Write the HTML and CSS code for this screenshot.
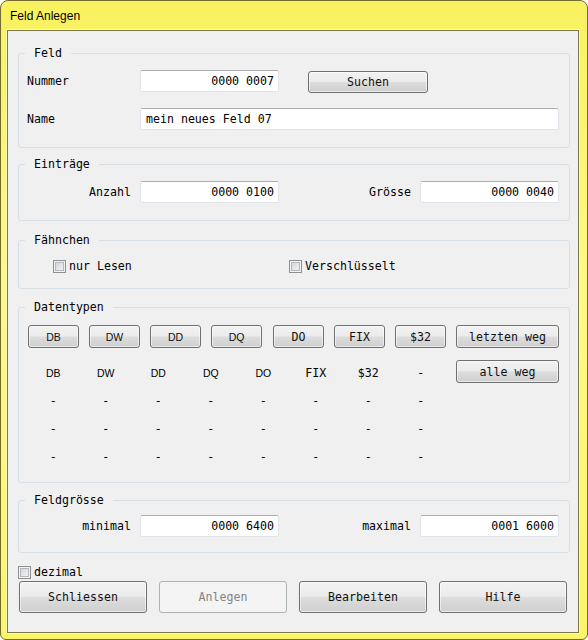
FILE: index.html
```html
<!DOCTYPE html>
<html lang="de">
<head>
<meta charset="utf-8">
<title>Feld Anlegen</title>
<link rel="stylesheet" href="styles.css">
</head>
<body>
<div class="window">
  <div class="titlebar">Feld Anlegen</div>
  <div class="client">
    <fieldset class="group g-feld">
      <legend>Feld</legend>
      <div class="row">
        <span class="lbl lbl-left">Nummer</span>
        <input class="field num" value="0000 0007" readonly>
        <button class="btn btn-suchen" type="button">Suchen</button>
      </div>
      <div class="row row-name">
        <span class="lbl lbl-left">Name</span>
        <input class="field wide" value="mein neues Feld 07" readonly>
      </div>
    </fieldset>

    <fieldset class="group g-eintraege">
      <legend>Einträge</legend>
      <div class="pair-row">
        <span class="lbl lbl-right">Anzahl</span>
        <input class="field num" value="0000 0100" readonly>
        <span class="lbl lbl-right">Grösse</span>
        <input class="field num" value="0000 0040" readonly>
      </div>
    </fieldset>

    <fieldset class="group g-faehnchen">
      <legend>Fähnchen</legend>
      <div class="flag-row">
        <span class="checkitem"><span class="check"></span><span>nur Lesen</span></span>
        <span class="checkitem"><span class="check"></span><span>Verschlüsselt</span></span>
      </div>
    </fieldset>

    <fieldset class="group g-datentypen">
      <legend>Datentypen</legend>
      <div class="dt-buttons">
        <button class="btn dt sans" type="button">DB</button>
        <button class="btn dt sans" type="button">DW</button>
        <button class="btn dt sans" type="button">DD</button>
        <button class="btn dt sans" type="button">DQ</button>
        <button class="btn dt dt-do" type="button">DO</button>
        <button class="btn dt" type="button">FIX</button>
        <button class="btn dt" type="button">$32</button>
        <button class="btn dt-wide" type="button">letzten weg</button>
      </div>
      <div class="dt-body">
        <div class="dt-grid">
          <span class="sans">DB</span><span class="sans">DW</span><span class="sans">DD</span><span class="sans">DQ</span><span class="sans">DO</span><span>FIX</span><span>$32</span><span>-</span>
          <span>-</span><span>-</span><span>-</span><span>-</span><span>-</span><span>-</span><span>-</span><span>-</span>
          <span>-</span><span>-</span><span>-</span><span>-</span><span>-</span><span>-</span><span>-</span><span>-</span>
          <span>-</span><span>-</span><span>-</span><span>-</span><span>-</span><span>-</span><span>-</span><span>-</span>
        </div>
        <button class="btn dt-wide alle" type="button">alle weg</button>
      </div>
    </fieldset>

    <fieldset class="group g-feldgroesse">
      <legend>Feldgrösse</legend>
      <div class="pair-row">
        <span class="lbl lbl-right">minimal</span>
        <input class="field num" value="0000 6400" readonly>
        <span class="lbl lbl-right">maximal</span>
        <input class="field num" value="0001 6000" readonly>
      </div>
    </fieldset>

    <div class="dezimal"><span class="check"></span><span>dezimal</span></div>

    <div class="bottom-row">
      <button class="btn big" type="button">Schliessen</button>
      <button class="btn big" type="button" disabled>Anlegen</button>
      <button class="btn big" type="button">Bearbeiten</button>
      <button class="btn big" type="button">Hilfe</button>
    </div>
  </div>
</div>
</body>
</html>
```

FILE: styles.css
```css
html, body {
  margin: 0;
  padding: 0;
  background: #ffffff;
}

.window {
  width: 588px;
  height: 640px;
  box-sizing: border-box;
  border: 1px solid #6f6c2e;
  border-radius: 8px 8px 6px 6px;
  background: linear-gradient(180deg, #f8f260 0%, #fdf986 45%, #fbf56a 100%);
  padding: 0 8px 6px 6px;
  display: flex;
  flex-direction: column;
  font-family: "DejaVu Sans Mono", "Liberation Mono", monospace;
  font-size: 11.6px;
  font-weight: normal;
  color: #000;
}

.titlebar {
  height: 29px;
  line-height: 30px;
  padding-left: 3px;
  font-family: "Liberation Sans", Arial, sans-serif;
  font-size: 12px;
  color: #000;
}

.client {
  flex: 1;
  border: 1px solid #7a7748;
  box-shadow: 0 0 0 1px #fdfbb8;
  background: #f0f0f0;
  padding: 15px 8px 0 10px;
  display: flex;
  flex-direction: column;
}

.group {
  margin: 0;
  border: 1px solid #d5dfe5;
  border-radius: 3px;
  padding: 0 10px 0 9px;
  min-width: 0;
}

.group legend {
  padding: 0 9px;
  margin-left: -3px;
  line-height: 14px;
  height: 14px;
}

.g-feld { padding-top: 10px; padding-bottom: 17px; }
.g-eintraege { margin-top: 9px; padding-top: 10px; padding-bottom: 17px; }
.g-faehnchen { margin-top: 12px; padding-top: 12px; padding-bottom: 15px; }
.g-datentypen { margin-top: 11px; padding-top: 11px; padding-bottom: 11px; }
.g-feldgroesse { margin-top: 10px; padding-top: 8px; padding-bottom: 15px; }

.row {
  display: flex;
  align-items: flex-start;
  height: 22px;
}

.row-name { margin-top: 16px; }

.lbl {
  line-height: 22px;
  white-space: nowrap;
}

.lbl-left {
  width: 113px;
  margin-left: -1px;
}

.lbl-right {
  text-align: right;
  padding-right: 9px;
}

.field {
  box-sizing: border-box;
  height: 22px;
  margin: 0;
  border: 1px solid #e2e3ea;
  border-top-color: #abadb3;
  border-radius: 2px;
  background: #fff;
  font: inherit;
  color: #000;
  outline: none;
  padding: 0 4px 0 5px;
}

.num {
  width: 139px;
  text-align: right;
}

.wide {
  width: 419px;
  text-align: left;
}

.pair-row {
  display: grid;
  grid-template-columns: 112px 139px 141px 139px;
  height: 22px;
}

.btn {
  box-sizing: border-box;
  margin: 0;
  padding: 0;
  font-family: inherit;
  font-size: inherit;
  font-weight: normal;
  color: #111;
  border: 1px solid #707070;
  border-radius: 3px;
  background: linear-gradient(180deg, #f2f2f2 0%, #ebebeb 48%, #dddddd 52%, #cfcfcf 100%);
  box-shadow: inset 0 0 0 1px rgba(255, 255, 255, 0.55);
  cursor: default;
}

.btn:disabled {
  border-color: #adb2b5;
  background: #f4f4f4;
  box-shadow: none;
  color: #838383;
}

.btn-suchen {
  width: 120px;
  height: 22px;
  margin-left: 29px;
  margin-top: 1px;
}

.flag-row {
  display: grid;
  grid-template-columns: 236px auto;
  padding-left: 25px;
  height: 14px;
}

.checkitem {
  display: flex;
  align-items: center;
  gap: 3px;
  height: 14px;
}

.check {
  display: inline-block;
  width: 13px;
  height: 13px;
  box-sizing: border-box;
  border: 1px solid #8e8f8f;
  background: linear-gradient(135deg, #c9ccd1 0%, #e6e7e9 55%, #f7f7f7 100%);
  box-shadow: inset 0 0 0 1px #f4f4f4, inset 0 0 0 2px #b4b8bd;
  flex: none;
}

.dt-buttons {
  display: flex;
  gap: 10px;
  height: 23px;
}

.dt {
  width: 51px;
  height: 23px;
}

.dt-do { margin-left: 1px; }

.dt-wide {
  width: 103px;
  height: 23px;
}

.btn.sans,
.sans {
  font-family: "Liberation Sans", Arial, sans-serif;
  font-size: 10.5px;
}

.dt-body {
  display: flex;
  justify-content: space-between;
  align-items: flex-start;
  margin-top: 11px;
}

.dt-grid {
  display: grid;
  grid-template-columns: repeat(8, 52.5px);
  grid-auto-rows: 28px;
  align-items: center;
  justify-items: center;
  margin-left: -1px;
}

.alle {
  margin-top: 1px;
}

.dezimal {
  display: flex;
  align-items: center;
  gap: 3px;
  height: 14px;
  margin-top: 12px;
}

.bottom-row {
  display: flex;
  gap: 12px;
  margin-top: 2px;
  padding-left: 1px;
}

.big {
  width: 128px;
  height: 32px;
}
```
